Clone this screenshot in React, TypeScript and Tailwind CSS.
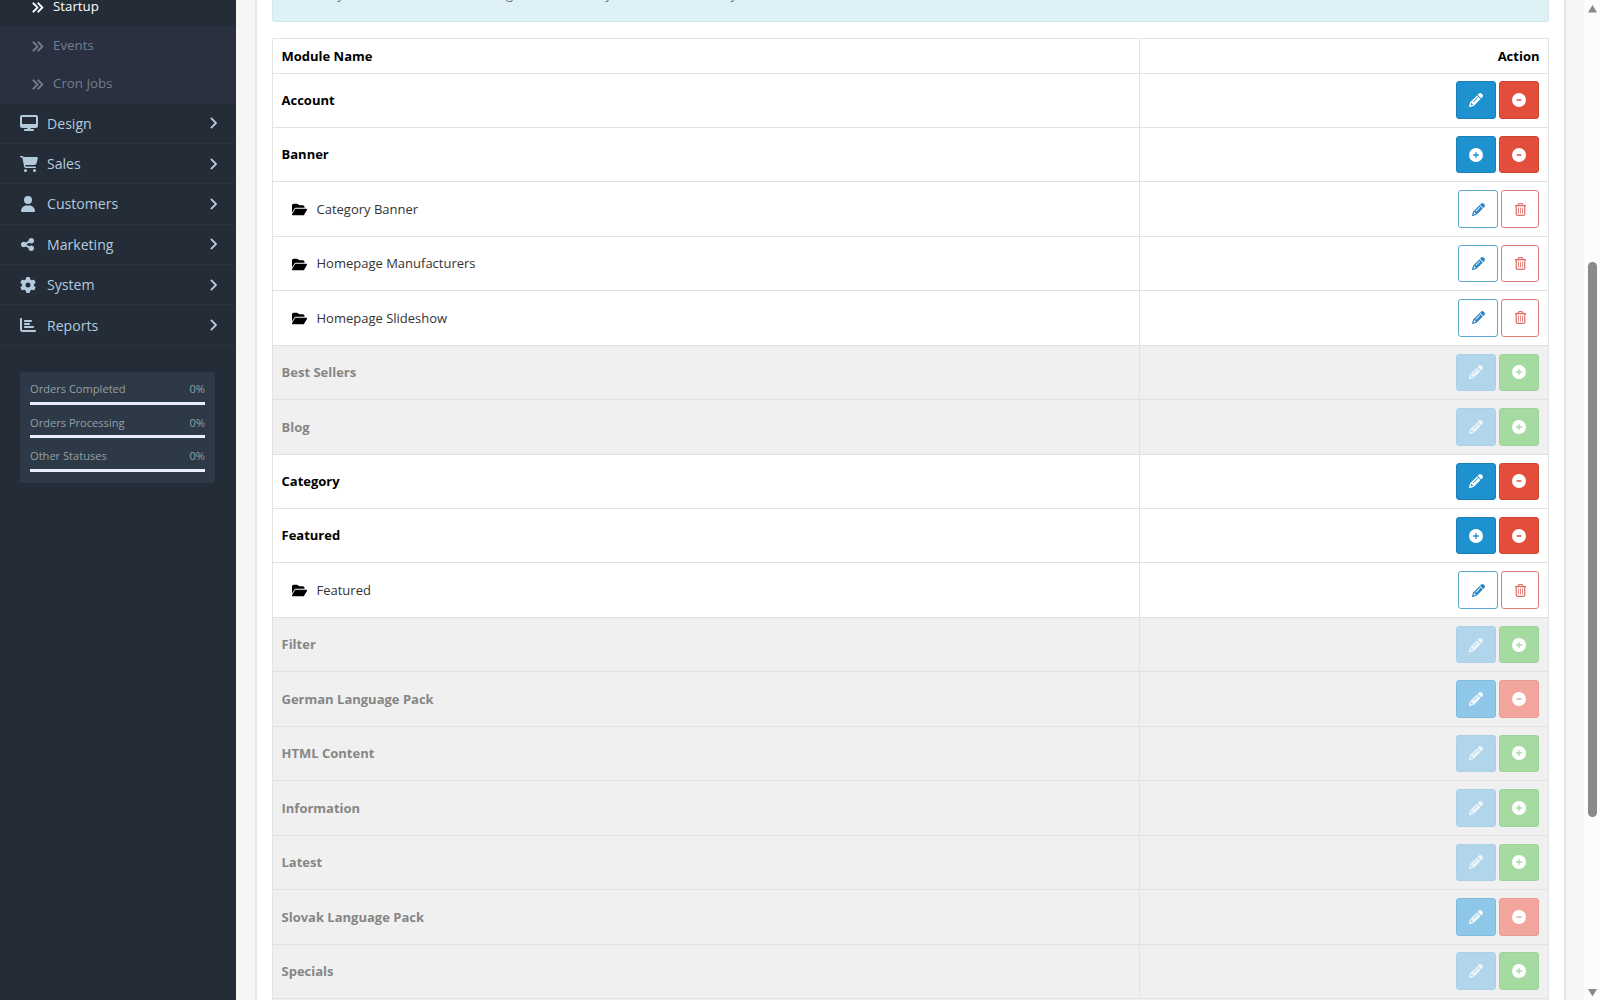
import clsx from "clsx";
import type { IconType } from "react-icons";
import {
  FaAnglesRight,
  FaCartShopping,
  FaChartBar,
  FaChevronRight,
  FaCircleExclamation,
  FaCircleMinus,
  FaCirclePlus,
  FaDesktop,
  FaFolderOpen,
  FaGear,
  FaPencil,
  FaRegTrashCan,
  FaShareNodes,
  FaUser,
} from "react-icons/fa6";

type MenuItem = { label: string; icon: IconType; size: string };

const menu: MenuItem[] = [
  { label: "Design", icon: FaDesktop, size: "size-[18px]" },
  { label: "Sales", icon: FaCartShopping, size: "size-[18px]" },
  { label: "Customers", icon: FaUser, size: "size-4" },
  { label: "Marketing", icon: FaShareNodes, size: "size-[15px]" },
  { label: "System", icon: FaGear, size: "size-4" },
  { label: "Reports", icon: FaChartBar, size: "size-4" },
];

const stats = ["Orders Completed", "Orders Processing", "Other Statuses"];

type RowKind = "single" | "multi" | "child" | "off" | "orphan";

const modules: { name: string; kind: RowKind }[] = [
  { name: "Account", kind: "single" },
  { name: "Banner", kind: "multi" },
  { name: "Category Banner", kind: "child" },
  { name: "Homepage Manufacturers", kind: "child" },
  { name: "Homepage Slideshow", kind: "child" },
  { name: "Best Sellers", kind: "off" },
  { name: "Blog", kind: "off" },
  { name: "Category", kind: "single" },
  { name: "Featured", kind: "multi" },
  { name: "Featured", kind: "child" },
  { name: "Filter", kind: "off" },
  { name: "German Language Pack", kind: "orphan" },
  { name: "HTML Content", kind: "off" },
  { name: "Information", kind: "off" },
  { name: "Latest", kind: "off" },
  { name: "Slovak Language Pack", kind: "orphan" },
  { name: "Specials", kind: "off" },
];

const buttonStyles = {
  primary: "w-10 bg-[#1e91cf] border-[#1a7fb6] text-white",
  danger: "w-10 bg-[#e34e3c] border-[#cb4535] text-white",
  primaryOff: "w-10 bg-[#b1d5eb] border-[#abd0e7] text-[#edf5fa]",
  success: "w-10 bg-[#a5dba0] border-[#9fd29b] text-white",
  primaryFaded: "w-10 bg-[#8ec7e7] border-[#82bcdd] text-[#f4f9fc]",
  dangerFaded: "w-10 bg-[#f1a59d] border-[#e79c94] text-white",
  outlinePrimary: "w-10 bg-white border-[#5ba9d3] text-[#2b83c4]",
  outlineDanger: "w-[38px] bg-white border-[#dc7f77] text-[#dd6f68]",
};

const actions: Record<RowKind, [keyof typeof buttonStyles, IconType][]> = {
  single: [["primary", FaPencil], ["danger", FaCircleMinus]],
  multi: [["primary", FaCirclePlus], ["danger", FaCircleMinus]],
  child: [["outlinePrimary", FaPencil], ["outlineDanger", FaRegTrashCan]],
  off: [["primaryOff", FaPencil], ["success", FaCirclePlus]],
  orphan: [["primaryFaded", FaPencil], ["dangerFaded", FaCircleMinus]],
};

function SubItem({ label, active }: { label: string; active?: boolean }) {
  return (
    <div
      className={clsx(
        "flex h-[38px] shrink-0 items-center pl-[31px] text-[13.3px]",
        active ? "text-white" : "text-[#757e90]"
      )}
    >
      <FaAnglesRight className="size-[13px] stroke-current stroke-[16]" />
      <span className="ml-[9px]">{label}</span>
    </div>
  );
}

function Sidebar() {
  return (
    <nav className="flex h-full w-[235.5px] shrink-0 flex-col bg-[#242c38]">
      <div className="flex h-[26px] shrink-0 flex-col justify-end">
        <SubItem label="Startup" active />
      </div>
      <div className="h-[77.5px] shrink-0 bg-[#2a303f] pt-px">
        <SubItem label="Events" />
        <SubItem label="Cron Jobs" />
      </div>
      {menu.map(({ label, icon: Icon, size }) => (
        <div
          key={label}
          className="flex h-[40.4px] shrink-0 items-center border-b border-[#29323d] pr-[17px] pl-5 text-[14.1px] text-[#b3cbdd]"
        >
          <span className="flex w-[27px]">
            <Icon className={size} />
          </span>
          <span className="flex-1">{label}</span>
          <FaChevronRight className="size-3 stroke-current stroke-[24]" />
        </div>
      ))}
      <div className="mr-[20.5px] ml-5 mt-[26px] h-[111px] shrink-0 rounded-xs bg-[#2e3947] px-2.5 pt-2 text-[11.1px] text-[#93a0a2]">
        {stats.map((label) => (
          <div key={label} className="h-[33.5px]">
            <div className="flex h-[22px] items-center justify-between pb-[3px]">
              <span>{label}</span>
              <span>0%</span>
            </div>
            <div className="h-[3px] bg-[#e9ecfa]" />
          </div>
        ))}
      </div>
    </nav>
  );
}

function ModuleRow({ name, kind }: { name: string; kind: RowKind }) {
  const muted = kind === "off" || kind === "orphan";
  return (
    <div
      className={clsx(
        "flex h-[54.44px] shrink-0 border-b border-[#e0e1e2]",
        muted ? "bg-[#f0f0f0] text-[#868686]" : "text-black"
      )}
    >
      <div className="flex w-[867px] items-center border-r border-[#e3e4e5] pt-px pl-[8.5px]">
        {kind === "child" ? (
          <>
            <FaFolderOpen className="ml-2.5 size-[15px]" />
            <span className="ml-2.5 text-[#333]">{name}</span>
          </>
        ) : (
          <span className="font-bold">{name}</span>
        )}
      </div>
      <div className="flex flex-1 items-center justify-end gap-[3px] pr-[8.5px]">
        {actions[kind].map(([style, Icon]) => (
          <button
            key={style}
            className={clsx(
              "flex h-[37.5px] items-center justify-center rounded-[3px] border",
              buttonStyles[style]
            )}
          >
            <Icon className={kind === "child" ? "size-[13px]" : "size-3.5"} />
          </button>
        ))}
      </div>
    </div>
  );
}

function Scrollbar() {
  return (
    <div className="flex h-full w-4 shrink-0 flex-col items-center bg-[#fcfcfc] pt-[5px] pb-[3px] text-[#8a8a8a]">
      <svg viewBox="0 0 9 8" className="h-2 w-[9px]" fill="currentColor">
        <path d="M4.5 0 9 7.5H0z" />
      </svg>
      <div className="mt-[249px] h-[555px] w-[9px] rounded-full bg-[#8a8a8a]" />
      <svg viewBox="0 0 9 8" className="mt-auto h-2 w-[9px]" fill="currentColor">
        <path d="M0 0h9L4.500 7.500z" />
      </svg>
    </div>
  );
}

export default function App() {
  return (
    <div className="flex h-[1000px] w-[1600px] overflow-hidden bg-[#f5f5f5] font-['Open_Sans','Noto_Sans',sans-serif] text-[13px]">
      <Sidebar />
      <main className="flex h-full flex-1 pr-[18.5px] pl-[19.5px]">
        <div className="flex h-full flex-1 flex-col border-x-2 border-[#e7e7e7] bg-white px-[15px]">
          <div className="flex h-[22px] shrink-0 flex-col justify-end overflow-hidden rounded-b-[3px] border border-t-0 border-[#d0e7ec] bg-[#ddf1f6] pb-[15px] pl-[15px] text-[#5f7880]">
            <div className="flex h-[22px] shrink-0 items-start gap-1">
              <FaCircleExclamation className="mt-1 size-3" />
              <span className="leading-5">
                After you have installed and configured a module you can add it to a layout here!
              </span>
            </div>
          </div>
          <div className="mt-4 flex flex-1 flex-col overflow-hidden border-x border-t border-[#e3e4e5]">
            <div className="flex h-[34.5px] shrink-0 border-b border-[#e3e4e5] font-bold text-black">
              <div className="flex w-[867px] items-center border-r border-[#e3e4e5] pt-px pl-[8.5px]">
                Module Name
              </div>
              <div className="flex flex-1 items-center justify-end pt-px pr-2">Action</div>
            </div>
            {modules.map((m, i) => (
              <ModuleRow key={i} name={m.name} kind={m.kind} />
            ))}
            <div className="h-4 shrink-0 bg-[#f0f0f0]" />
          </div>
        </div>
      </main>
      <Scrollbar />
    </div>
  );
}
